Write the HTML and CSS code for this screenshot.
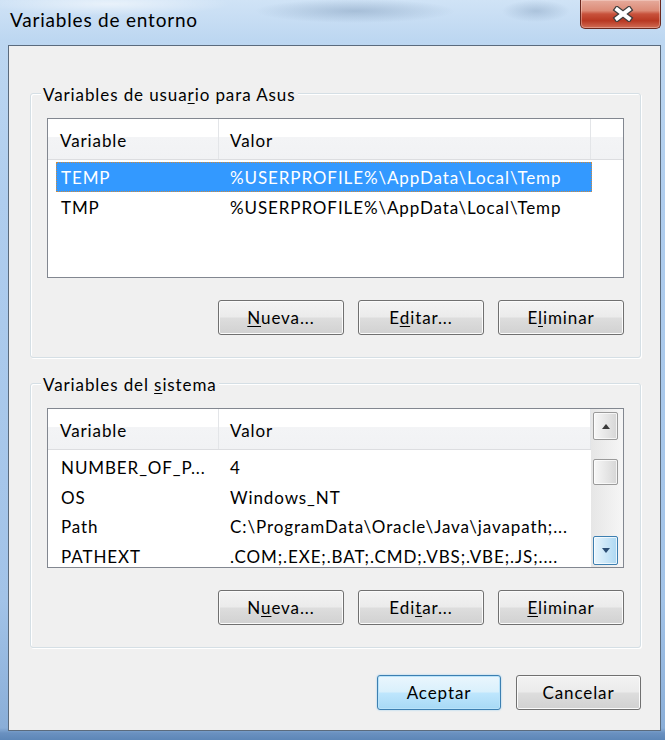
FILE: index.html
```html
<!DOCTYPE html>
<html lang="es">
<head>
    <meta charset="UTF-8">
    <title>Variables de entorno</title>
    <link rel="stylesheet" href="styles.css">
</head>
<body>
    <div class="window">
        <div class="titlebar">
            <span class="title">Variables de entorno</span>
            <button class="close-btn" title="Cerrar">
                <svg width="22" height="16" viewBox="0 0 22 16">
                    <path d="M2.6 1.6 L19.4 14.4 M19.4 1.6 L2.6 14.4" stroke="#3d3d3d" stroke-width="6.4"/>
                    <path d="M3.6 2.4 L18.4 13.6 M18.4 2.4 L3.6 13.6" stroke="#fff" stroke-width="4"/>
                </svg>
            </button>
        </div>

        <div class="client">
            <!-- user variables -->
            <section class="group">
                <div class="group-title">Variables de usua<u>r</u>io para Asus</div>
                <div class="list">
                    <div class="list-main">
                        <div class="list-header">
                            <div class="col col-name">Variable</div>
                            <div class="col col-value">Valor</div>
                            <div class="col col-fill"></div>
                        </div>
                        <div class="rows">
                            <div class="row selected"><span>TEMP</span><span>%USERPROFILE%\AppData\Local\Temp</span></div>
                            <div class="row"><span>TMP</span><span>%USERPROFILE%\AppData\Local\Temp</span></div>
                        </div>
                    </div>
                </div>
                <div class="actions">
                    <button class="btn"><u>N</u>ueva...</button>
                    <button class="btn">E<u>d</u>itar...</button>
                    <button class="btn">E<u>l</u>iminar</button>
                </div>
            </section>

            <!-- system variables -->
            <section class="group group-system">
                <div class="group-title">Variables del <u>s</u>istema</div>
                <div class="list">
                    <div class="list-main">
                        <div class="list-header">
                            <div class="col col-name">Variable</div>
                            <div class="col col-value">Valor</div>
                        </div>
                        <div class="rows">
                            <div class="row"><span>NUMBER_OF_P...</span><span>4</span></div>
                            <div class="row"><span>OS</span><span>Windows_NT</span></div>
                            <div class="row"><span>Path</span><span>C:\ProgramData\Oracle\Java\javapath;...</span></div>
                            <div class="row"><span>PATHEXT</span><span>.COM;.EXE;.BAT;.CMD;.VBS;.VBE;.JS;....</span></div>
                        </div>
                    </div>
                    <div class="scrollbar">
                        <div class="sb-btn">
                            <svg width="8" height="5" viewBox="0 0 8 5"><polygon points="0,5 4,0 8,5" fill="#3a3a3a"/></svg>
                        </div>
                        <div class="sb-thumb"></div>
                        <div class="sb-btn hot">
                            <svg width="8" height="5" viewBox="0 0 8 5"><polygon points="0,0 8,0 4,5" fill="#2c4e74"/></svg>
                        </div>
                    </div>
                </div>
                <div class="actions">
                    <button class="btn">N<u>u</u>eva...</button>
                    <button class="btn">Edi<u>t</u>ar...</button>
                    <button class="btn"><u>E</u>liminar</button>
                </div>
            </section>

            <div class="footer">
                <button class="btn btn-default">Aceptar</button>
                <button class="btn">Cancelar</button>
            </div>
        </div>
    </div>
</body>
</html>
```

FILE: styles.css
```css
* {
    box-sizing: border-box;
}
body {
    margin: 0;
    font-family: Lato, "Noto Sans", sans-serif;
    font-size: 17px;
    letter-spacing: 0.9px;
    color: #000;
}
u {
    text-underline-offset: 2px;
}

/* window frame (aero glass) */
.window {
    width: 665px;
    height: 740px;
    padding: 0 4px 0 8px;
    display: flex;
    flex-direction: column;
    background:
        radial-gradient(ellipse 100px 12px at 355px 11px, rgba(90, 120, 155, 0.32), transparent),
        radial-gradient(ellipse 34px 11px at 536px 11px, rgba(90, 120, 155, 0.28), transparent),
        radial-gradient(ellipse 120px 12px at 110px 4px, rgba(255, 255, 255, 0.55), transparent),
        linear-gradient(to bottom, #d0e3f6 0, #bdd7f1 40px, #afcdee 200px, #a2c3e8 600px, #8aaed8 728px, #6a91c0 733px, #5d86b7 740px);
}
.titlebar {
    height: 45px;
    display: flex;
    justify-content: space-between;
    align-items: flex-start;
    padding-left: 2px;
}
.title {
    font-size: 19px;
    letter-spacing: 0.8px;
    line-height: 1.2;
    padding-top: 9px;
}
.close-btn {
    width: 81px;
    height: 29px;
    padding: 0 0 0 4px;
    border: 1px solid #6a281e;
    border-top: none;
    border-radius: 0 0 5px 5px;
    background: linear-gradient(#e6ab9c 0%, #dc8b77 38%, #c8523c 50%, #b83822 74%, #d16d55 100%);
    box-shadow: inset 0 0 0 1px rgba(255, 235, 230, 0.35);
    display: flex;
    align-items: center;
    justify-content: center;
}

/* dialog body */
.client {
    height: 686px;
    border: 1px solid #5b6b7d;
    background: #f0f0f0;
    padding: 47px 19px 0 21px;
}
.group {
    border: 1px solid #d5dfe5;
    border-radius: 3px;
    box-shadow: inset 1px 1px 0 #fff, 1px 1px 0 #fff;
    padding: 0 16px 22px;
}
.group-system {
    margin-top: 25px;
}
.group-title {
    width: fit-content;
    margin: -9px 0 0 -6px;
    padding: 0 2px;
    line-height: 20px;
    background: #f0f0f0;
}

/* list view */
.list {
    height: 160px;
    margin-top: 13px;
    border: 1px solid #828790;
    background: #fff;
    display: flex;
}
.list-main {
    flex: 1;
    min-width: 0;
    display: flex;
    flex-direction: column;
}
.list-header {
    height: 41px;
    flex-shrink: 0;
    display: flex;
    border-bottom: 1px solid #dcdde0;
    background: linear-gradient(#fff 0, #fff 44%, #f3f4f6 44%, #f1f2f4 100%);
}
.col {
    padding: 3px 0 0 12px;
    line-height: 37px;
    border-right: 1px solid #e3e5e8;
}
.col-name {
    width: 171px;
}
.col-value {
    width: 372px;
    padding-left: 11px;
}
.col-fill {
    flex: 1;
    border-right: none;
}
.rows {
    flex: 1;
    overflow: hidden;
    padding: 2px 0 0 8px;
}
.row {
    width: 536px;
    height: 29.7px;
    padding-top: 1px;
    line-height: 29px;
    display: grid;
    grid-template-columns: 163px 1fr;
    white-space: nowrap;
}
.row span {
    overflow: hidden;
    padding-left: 5px;
}
.row span + span {
    padding-left: 11px;
}
.row.selected {
    background: #3399ff;
    color: #fff;
    outline: 1px dotted #cf8a3c;
    outline-offset: -1px;
}

/* vertical scrollbar */
.scrollbar {
    width: 32px;
    padding: 3px 5px 2px 2px;
    display: flex;
    flex-direction: column;
    background: linear-gradient(to right, #e6e6e6, #f6f6f6);
}
.sb-btn,
.sb-thumb {
    border: 1px solid #9a9a9a;
    border-radius: 2px;
    background: linear-gradient(to right, #f7f7f7, #e4e4e4 60%, #d6d6d6);
    box-shadow: inset 0 0 0 1px rgba(255, 255, 255, 0.7);
}
.sb-btn {
    height: 28px;
    display: flex;
    align-items: center;
    justify-content: center;
}
.sb-thumb {
    height: 26px;
    margin-top: 19px;
}
.sb-btn.hot {
    height: 29px;
    margin-top: auto;
    border-color: #3c7fb1;
    background: linear-gradient(to right, #e8f5fd, #c6e4f7 60%, #add8f2);
}

/* buttons */
.actions {
    display: flex;
    justify-content: flex-end;
    gap: 14px;
    margin-top: 22px;
}
.btn {
    width: 126px;
    height: 35px;
    padding: 0;
    font-family: inherit;
    font-size: 17px;
    letter-spacing: inherit;
    color: #000;
    border: 1px solid #707070;
    border-radius: 3px;
    background: linear-gradient(#f3f3f3 0%, #ebebeb 48%, #dddddd 52%, #d1d1d1 100%);
    box-shadow: inset 0 0 0 1px #fbfbfb;
}
.btn-default {
    border-color: #3c7fb1;
    background: linear-gradient(#eaf6fd 0%, #d9f0fc 48%, #bee6fd 52%, #a7d9f5 100%);
    box-shadow: inset 0 0 0 1px #b9e3fa, 0 0 2px #8fcaf0;
}
.footer {
    display: flex;
    justify-content: flex-end;
    gap: 15px;
    margin-top: 27px;
}
.footer .btn {
    width: 125px;
}
.footer .btn-default {
    width: 124px;
}
```
